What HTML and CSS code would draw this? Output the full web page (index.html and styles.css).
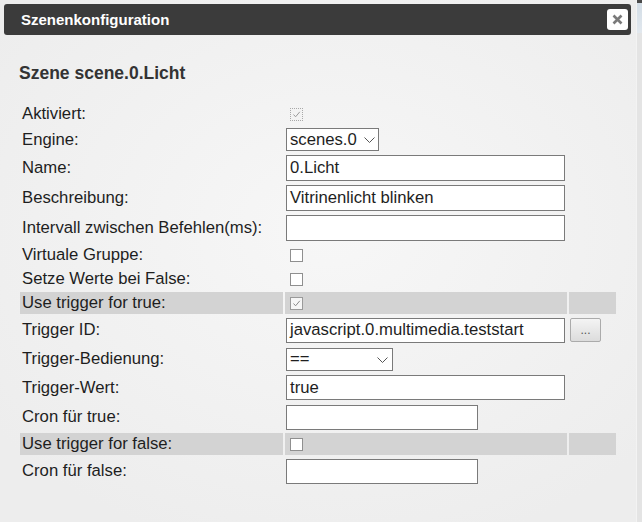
FILE: index.html
```html
<!DOCTYPE html>
<html lang="de">
<head>
<meta charset="utf-8">
<title>Szenenkonfiguration</title>
<link rel="stylesheet" href="styles.css">
</head>
<body>
<div class="page">
  <div class="dialog">
    <div class="titlebar">
      <span class="title">Szenenkonfiguration</span>
      <span class="close">
        <svg width="11" height="11" viewBox="0 0 11 11"><path d="M1.5 1.5 L9.5 9.5 M9.5 1.5 L1.5 9.5" stroke="#7a7a7a" stroke-width="2.6" stroke-linecap="butt"/></svg>
      </span>
    </div>
    <div class="content">
      <h2 class="heading">Szene scene.0.Licht</h2>
      <table class="form">
        <colgroup><col class="c-label"><col class="c-value"><col class="c-extra"></colgroup>
        <tr class="r-chk"><td class="lbl">Aktiviert:</td><td class="val"><span class="cb cb-focus"><svg width="11" height="11" viewBox="0 0 11 11"><path d="M2.5 5.5 L4.6 7.8 L8.8 2.8" fill="none" stroke="#9a9a9a" stroke-width="1"/></svg></span></td><td></td></tr>
        <tr class="r-sel"><td class="lbl">Engine:</td><td class="val"><span class="sel sel-engine"><span>scenes.0</span><svg width="11" height="6" viewBox="0 0 11 6"><path d="M0.5 0.5 L5.5 5.5 L10.5 0.5" fill="none" stroke="#555" stroke-width="1"/></svg></span></td><td></td></tr>
        <tr class="r-in"><td class="lbl">Name:</td><td class="val"><span class="inp inp-wide">0.Licht</span></td><td></td></tr>
        <tr class="r-in"><td class="lbl">Beschreibung:</td><td class="val"><span class="inp inp-wide">Vitrinenlicht blinken</span></td><td></td></tr>
        <tr class="r-in"><td class="lbl">Intervall zwischen Befehlen(ms):</td><td class="val"><span class="inp inp-wide"></span></td><td></td></tr>
        <tr class="r-chk"><td class="lbl">Virtuale Gruppe:</td><td class="val"><span class="cb"></span></td><td></td></tr>
        <tr class="r-chk"><td class="lbl">Setze Werte bei False:</td><td class="val"><span class="cb"></span></td><td></td></tr>
        <tr class="r-chk band"><td class="lbl">Use trigger for true:</td><td class="val"><span class="cb cb-light"><svg width="11" height="11" viewBox="0 0 11 11"><path d="M2.5 5.5 L4.6 7.8 L8.8 2.8" fill="none" stroke="#8a8a8a" stroke-width="1"/></svg></span></td><td></td></tr>
        <tr class="r-in"><td class="lbl">Trigger ID:</td><td class="val"><span class="inp inp-wide inp-25">javascript.0.multimedia.teststart</span></td><td class="ext"><span class="btn">...</span></td></tr>
        <tr class="r-sel2"><td class="lbl">Trigger-Bedienung:</td><td class="val"><span class="sel sel-op"><span>==</span><svg width="11" height="6" viewBox="0 0 11 6"><path d="M0.5 0.5 L5.5 5.5 L10.5 0.5" fill="none" stroke="#555" stroke-width="1"/></svg></span></td><td></td></tr>
        <tr class="r-in2"><td class="lbl">Trigger-Wert:</td><td class="val"><span class="inp inp-wide inp-25">true</span></td><td></td></tr>
        <tr class="r-in"><td class="lbl">Cron für true:</td><td class="val"><span class="inp inp-short inp-25"></span></td><td></td></tr>
        <tr class="r-chk band"><td class="lbl">Use trigger for false:</td><td class="val"><span class="cb"></span></td><td></td></tr>
        <tr class="r-in"><td class="lbl">Cron für false:</td><td class="val"><span class="inp inp-short inp-25"></span></td><td></td></tr>
      </table>
    </div>
  </div>
  <div class="strip"><div class="strip-top"></div></div>
</div>
</body>
</html>
```

FILE: styles.css
```css
html, body {
  margin: 0;
  padding: 0;
}
body {
  width: 642px;
  height: 522px;
  overflow: hidden;
  font-family: "Liberation Sans", Arial, sans-serif;
  color: #1e1e1e;
  background: #efefef;
}
.page {
  display: flex;
  width: 642px;
  height: 522px;
}
.dialog {
  width: 636px;
  height: 522px;
  box-sizing: border-box;
  padding: 4px 0 0 4px;
  background: radial-gradient(ellipse 420px 330px at 330px 230px, #f7f7f7 0%, #f1f1f1 60%, #ededed 100%);
}
.titlebar {
  width: 627px;
  height: 31px;
  box-sizing: border-box;
  background: #3b3b3b;
  border-radius: 3px;
  display: flex;
  align-items: center;
  justify-content: space-between;
  padding: 0 3px 0 17px;
}
.title {
  color: #fff;
  font-weight: bold;
  font-size: 15px;
}
.close {
  width: 21px;
  height: 21px;
  background: #fff;
  border-radius: 3px;
  display: flex;
  align-items: center;
  justify-content: center;
}
.content {
  padding: 0 0 0 14px;
}
.heading {
  margin: 28px 0 0 1px;
  font-size: 17.5px;
  line-height: 20px;
  font-weight: bold;
  color: #333;
}
.form {
  margin-top: 18px;
  border-collapse: separate;
  border-spacing: 2px;
  table-layout: fixed;
  width: 600px;
  font-size: 16.7px;
}
.c-label { width: 263px; }
.c-value { width: 282px; }
.c-extra { width: 47px; }
.form td {
  padding: 0;
  vertical-align: middle;
  white-space: nowrap;
}
.form td.lbl {
  padding-left: 2px;
}
.form td.val {
  padding-left: 1px;
}
.form td.ext {
  padding-left: 1px;
}
.r-chk td { height: 22px; }
.r-sel td { height: 25px; }
.r-in td { height: 28px; }
.r-sel2 td { height: 26px; }
.r-in2 td { height: 27px; }
.band td { background: #d3d3d3; }

.inp {
  display: flex;
  align-items: center;
  box-sizing: border-box;
  height: 26px;
  padding: 0 3px;
  background: #fff;
  border: 1px solid #7a7a7a;
  color: #1e1e1e;
}
.inp-25 { height: 25px; }
.inp-wide { width: 279px; }
.inp-short { width: 192px; }

.sel {
  display: flex;
  align-items: center;
  justify-content: space-between;
  box-sizing: border-box;
  height: 23px;
  padding: 0 4px 0 3px;
  background: #fff;
  border: 1px solid #7a7a7a;
}
.sel svg { margin-top: 1px; }
.sel-engine { width: 93px; padding-right: 3px; }
.sel-op { width: 107px; }

.cb {
  display: flex;
  align-items: center;
  justify-content: center;
  box-sizing: border-box;
  width: 13px;
  height: 13px;
  margin-left: 4px;
  background: #fff;
  border: 1px solid #8f8f8f;
}
.cb-focus {
  border: 1px dotted #a8a8a8;
  background: #f3f3f3;
}
.cb-light {
  border-color: #9a9a9a;
  background: #f6f6f6;
}

.btn {
  display: flex;
  align-items: flex-end;
  justify-content: center;
  box-sizing: border-box;
  width: 31px;
  height: 24px;
  padding-bottom: 5px;
  border: 1px solid #ababab;
  border-radius: 2px;
  background: linear-gradient(#f4f4f4, #dcdcdc);
  color: #555;
  font-size: 12px;
  line-height: 11px;
}

.strip {
  width: 6px;
  height: 522px;
  background: #e4e4e4;
  border-left: 1px solid #f3f3f3;
  box-sizing: border-box;
}
.strip-top {
  height: 33px;
  background: linear-gradient(#4a4a4a 0, #4a4a4a 3px, #d3dde6 3px, #e2e8ee 100%);
}
```
